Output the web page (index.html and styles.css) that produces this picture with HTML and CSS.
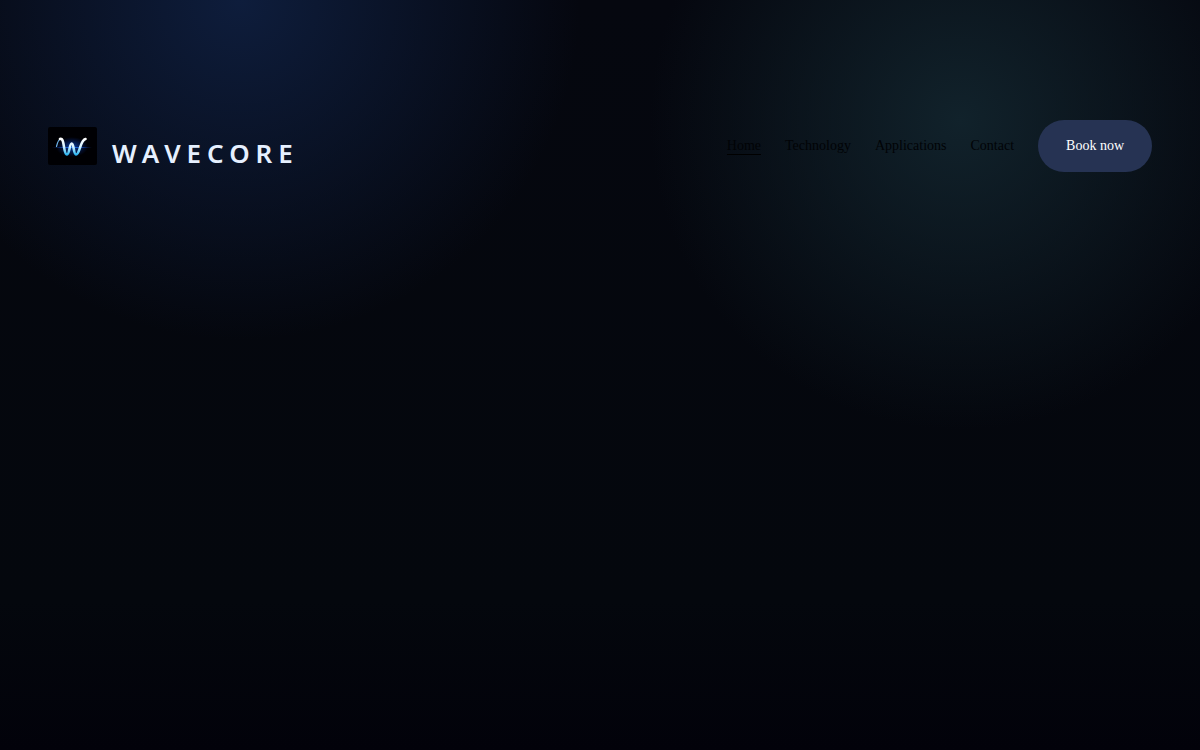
FILE: index.html
```html
<!DOCTYPE html>
<html lang="en">
<head>
    <meta charset="UTF-8">
    <meta name="viewport" content="width=device-width, initial-scale=1.0">
    <title>Wavecore</title>
    <link rel="stylesheet" href="styles.css">
</head>
<body>
    <header class="site-header">
        <a class="brand" href="#">
            <svg class="brand-logo" viewBox="0 0 49 38" aria-hidden="true">
                <defs>
                    <linearGradient id="wave" x1="0" y1="0" x2="0" y2="1">
                        <stop offset="0" stop-color="#ffffff"/>
                        <stop offset="0.5" stop-color="#d8f3ff"/>
                        <stop offset="1" stop-color="#2cb8f4"/>
                    </linearGradient>
                    <linearGradient id="beam">
                        <stop offset="0" stop-color="#1450e0" stop-opacity="0"/>
                        <stop offset="0.5" stop-color="#1c7cff"/>
                        <stop offset="1" stop-color="#1450e0" stop-opacity="0"/>
                    </linearGradient>
                    <radialGradient id="glow">
                        <stop offset="0" stop-color="#0a50d0" stop-opacity="0.8"/>
                        <stop offset="1" stop-color="#0a30a0" stop-opacity="0"/>
                    </radialGradient>
                </defs>
                <rect width="49" height="38" rx="2" fill="#000003"/>
                <ellipse cx="24" cy="20" rx="16" ry="10" fill="url(#glow)"/>
                <rect x="4" y="20" width="40" height="1" fill="url(#beam)"/>
                <path d="M8.5 19.5C9.5 15 10.5 12 13 12" fill="none" stroke="#6db4ec" stroke-width="1.2" stroke-linecap="round"/>
                <path d="M12 12C17 10 15 27.5 19 27.5C21.5 27.5 21.5 16.5 23.7 16.5C26 16.5 25.5 27.5 28 27.5C32 27.5 32 13 37.5 12" fill="none" stroke="url(#wave)" stroke-width="2.6" stroke-linecap="round"/>
            </svg>
            <span class="brand-name">WAVECORE</span>
        </a>
        <nav class="site-nav">
            <a class="nav-link active" href="#">Home</a>
            <a class="nav-link" href="#technology">Technology</a>
            <a class="nav-link" href="#applications">Applications</a>
            <a class="nav-link" href="#contact">Contact</a>
            <a class="nav-cta" href="#book">Book now</a>
        </nav>
    </header>
</body>
</html>
```
FILE: styles.css
```css
* {
    box-sizing: border-box;
}
body {
    margin: 0;
    min-height: 100vh;
    padding: 120px 48px 0;
    font-family: "Liberation Serif", "Times New Roman", serif;
    background:
        radial-gradient(circle at 20% 0, #0e1d3c, rgba(14, 29, 60, 0) 340px),
        radial-gradient(circle at 80% 120px, #11222b, rgba(17, 34, 43, 0) 310px),
        linear-gradient(#05070f, #04070d 80%, #02020a);
}
.site-header {
    display: flex;
    align-items: center;
    justify-content: space-between;
}
.brand {
    display: flex;
    align-items: center;
    gap: 15px;
    text-decoration: none;
}
.brand-logo {
    width: 49px;
    height: 38px;
}
.brand-name {
    padding-top: 14px;
    font-family: "Noto Sans", sans-serif;
    font-size: 26px;
    font-weight: 600;
    line-height: 36px;
    letter-spacing: 6px;
    color: #e6f0ff;
}
.site-nav {
    display: flex;
    align-items: center;
    gap: 24px;
    font-size: 14px;
    line-height: 16px;
}
.nav-link {
    color: #010306;
    text-decoration: none;
    border-bottom: 1px solid transparent;
}
.nav-link.active {
    border-bottom-color: #000;
}
.nav-cta {
    padding: 18px 28px;
    color: #fff;
    text-decoration: none;
    background: #263353;
    border-radius: 26px;
}
```
